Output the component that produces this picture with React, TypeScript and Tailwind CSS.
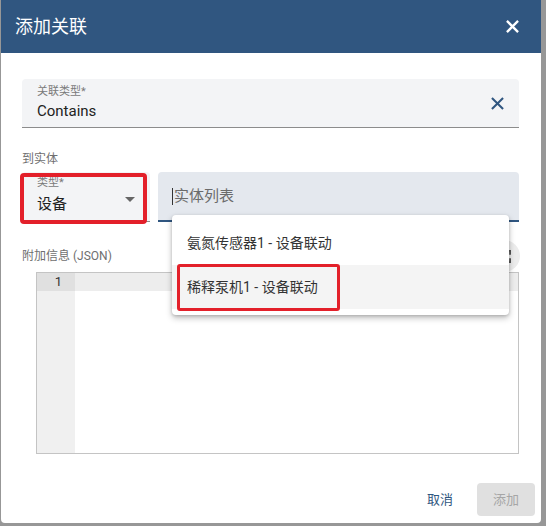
import React from "react";

const XIcon = ({ size, color, stroke }: { size: number; color: string; stroke: number }) => (
  <svg width={size} height={size} viewBox="0 0 14 14">
    <path d="M1 1 L13 13 M13 1 L1 13" stroke={color} strokeWidth={stroke} strokeLinecap="butt" fill="none" />
  </svg>
);

export default function App() {
  return (
    <div
      className="w-[546px] h-[526px] bg-[#979797] flex overflow-hidden"
      style={{ fontFamily: 'Roboto, "Noto Sans CJK SC", sans-serif' }}
    >
      <div className="ml-[1px] w-[540px] h-[523px] bg-white rounded-b-[4px] flex flex-col relative">
        {/* header */}
        <div className="h-[53px] bg-[#305680] flex items-center justify-between pl-[14px] pr-[22px] shrink-0">
          <span className="text-[18px] text-white leading-[24px]">添加关联</span>
          <XIcon size={13} color="#ffffff" stroke={2.5} />
        </div>

        {/* body */}
        <div className="pl-[21px] pr-[22px] flex flex-col">
          <div className="mt-[26px] h-[49px] bg-[#f3f4f6] rounded-t-[4px] border-b border-[#8c8c8c] flex items-center justify-between pl-[15px] pr-[15px]">
            <div className="flex flex-col">
              <span className="text-[11px] leading-[14px] text-[#7a7a7a]">关联类型*</span>
              <span className="text-[15px] leading-[20px] text-[#222] mt-[2px]">Contains</span>
            </div>
            <XIcon size={13} color="#305680" stroke={2.2} />
          </div>

          <div className="mt-[24px] text-[12px] leading-[14px] text-[#6f6f6f]">到实体</div>

          <div className="mt-[6px] flex gap-[8px]">
            <div className="relative w-[128px] h-[50px] bg-[#f3f4f6] rounded-t-[4px] border-b border-[#8c8c8c] flex items-start justify-between pl-[15px] pr-[15px] pt-[4px]">
              <div className="flex flex-col">
                <span className="text-[11px] leading-[14px] text-[#7a7a7a]">类型*</span>
                <span className="text-[15px] leading-[20px] text-[#222] mt-[4px]">设备</span>
              </div>
              <div className="mt-[21px] w-0 h-0 border-l-[5px] border-r-[5px] border-t-[5px] border-l-transparent border-r-transparent border-t-[#666]" />
              <div className="absolute left-[-2px] right-[3px] top-[1px] bottom-[-3px] border-[4px] border-[#e3202a] rounded-[4px]" />
            </div>
            <div className="flex-1 h-[50px] bg-[#e4e8ee] rounded-t-[4px] border-b-2 border-[#305680] flex items-center pl-[14px]">
              <div className="w-[1px] h-[17px] bg-[#333] mr-[1px]" />
              <span className="text-[15px] leading-[20px] text-[#6b6b6b]">实体列表</span>
            </div>
          </div>

          <div className="mt-[27px] h-[14px] flex items-center justify-between">
            <span className="text-[12px] leading-[14px] text-[#6f6f6f]">附加信息 (JSON)</span>
            <div className="-mr-[1px] w-[32px] h-[32px] rounded-full bg-[#ececec] flex items-center justify-center">
              <svg width="13" height="13" viewBox="0 0 14 14">
                <path d="M1 5 V1 H5 M9 1 H13 V5 M13 9 V13 H9 M5 13 H1 V9" stroke="#555" strokeWidth="2" fill="none" />
              </svg>
            </div>
          </div>

          <div className="mt-[9px] ml-[14px] h-[182px] border border-[#c4c4c4] flex">
            <div className="w-[38px] bg-[#f0f0f0] flex flex-col">
              <div className="h-[18px] bg-[#e0e0e0] text-[13px] leading-[18px] text-[#333] text-right pr-[13px]">1</div>
            </div>
            <div className="flex-1 flex flex-col">
              <div className="h-[18px] bg-[#ededed]" />
            </div>
          </div>
        </div>

        {/* footer */}
        <div className="mt-auto flex justify-end items-center gap-[3px] pr-[6px] pb-[7px]">
          <button className="w-[64px] h-[33px] text-[13px] text-[#305680] pr-[4px]">取消</button>
          <button className="w-[58px] h-[33px] rounded-[4px] bg-[#e0e0e0] text-[13px] text-[#a6a6a6]">添加</button>
        </div>

        {/* autocomplete dropdown */}
        <div className="absolute left-[171px] top-[215px] w-[337px] bg-white rounded-[4px] shadow-[0_3px_6px_rgba(0,0,0,0.25),0_1px_3px_rgba(0,0,0,0.15)] pt-[6px] pb-[6px]">
          <div className="h-[44px] flex items-center pl-[15px] text-[14px] text-[#333]">氨氮传感器1 - 设备联动</div>
          <div className="relative h-[44px] flex items-center pl-[15px] text-[14px] text-[#333] bg-[#f4f4f4]">
            稀释泵机1 - 设备联动
            <div className="absolute left-[5px] top-[-1px] w-[163px] h-[47px] border-[3px] border-[#e3202a] rounded-[3px]" />
          </div>
        </div>
      </div>
    </div>
  );
}
